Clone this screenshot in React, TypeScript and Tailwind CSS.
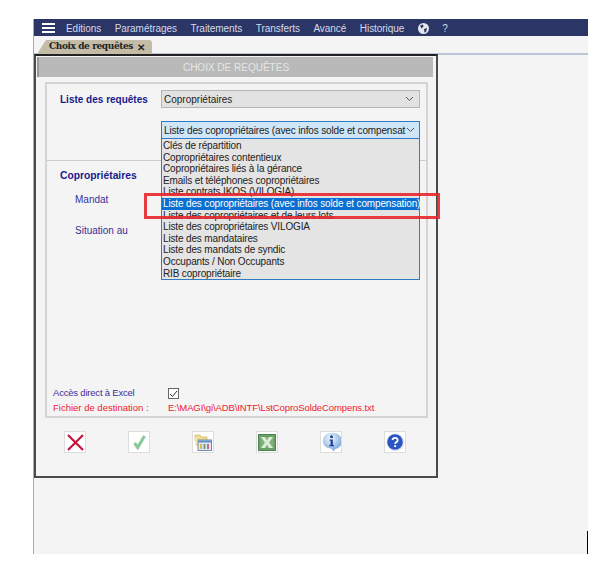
import React from "react";

const menus = ["Editions", "Paramétrages", "Traitements", "Transferts", "Avancé", "Historique"];

const options = [
  "Clés de répartition",
  "Copropriétaires contentieux",
  "Copropriétaires liés à la gérance",
  "Emails et téléphones copropriétaires",
  "Liste contrats IKOS (VILOGIA)",
  "Liste des copropriétaires (avec infos solde et compensation)",
  "Liste des copropriétaires et de leurs lots",
  "Liste des copropriétaires VILOGIA",
  "Liste des mandataires",
  "Liste des mandats de syndic",
  "Occupants / Non Occupants",
  "RIB copropriétaire",
];

const Chevron = () => (
  <svg width="9" height="6" viewBox="0 0 9 6" fill="none" stroke="#555" strokeWidth="1">
    <path d="M1 1l3.5 3.5L8 1" />
  </svg>
);

const IconCancel = () => (
  <svg width="17" height="17" viewBox="0 0 17 17" fill="none" stroke="#c8143c" strokeWidth="2.2">
    <path d="M1 1l15 15M16 1L1 16" />
  </svg>
);

const IconOk = () => (
  <svg width="15" height="16" viewBox="0 0 15 16" fill="none" stroke="#8fc79c" strokeWidth="3.2">
    <path d="M2.5 9l3.2 4.5L12.5 2" />
  </svg>
);

const IconTable = () => (
  <svg width="18" height="18" viewBox="0 0 18 18">
    <path d="M1 2h5l1 2h6v4H1z" fill="#f3dd8c" stroke="#c9b263" strokeWidth="0.7" />
    <path d="M1 4v9h4V8z" fill="#f7e7a8" />
    <rect x="4" y="7" width="13.5" height="10.5" fill="#dfe7f2" stroke="#6f8cb0" />
    <rect x="4.5" y="7.5" width="12.5" height="2" fill="#5f8fc4" />
    <rect x="6" y="11" width="2" height="5" fill="#d8b84c" />
    <rect x="9.5" y="11" width="2" height="5" fill="#6f9f6f" />
    <rect x="13" y="11" width="2" height="5" fill="#c9668a" />
  </svg>
);

const IconExcel = () => (
  <svg width="18" height="17" viewBox="0 0 18 17">
    <rect x="0.5" y="0.5" width="17" height="16" fill="#6aa066" stroke="#4d8550" />
    <rect x="2.500" y="3" width="13" height="11" fill="#7fb27a" />
    <path d="M3 3h4l2 3.500L11 3h4l-4 5.500 4 5.500h-4l-2-3.500L7 14H3l4-5.500z" fill="#dcefd6" />
  </svg>
);

const IconInfo = () => (
  <svg width="19" height="20" viewBox="0 0 19 20">
    <defs>
      <radialGradient id="bubble" cx="40%" cy="30%" r="75%">
        <stop offset="0%" stopColor="#f2f7fd" />
        <stop offset="100%" stopColor="#6d9fd8" />
      </radialGradient>
    </defs>
    <path d="M9.500 1a8.500 7.800 0 0 1 3 16.400L12 19.500 9 16.600A8.500 7.800 0 0 1 9.500 1z" fill="url(#bubble)" />
    <circle cx="9.500" cy="4.800" r="1.500" fill="#1c3f9a" />
    <path d="M7.500 7.500h3.300v5.500h1.200v1.200H7.400V13h1.200V8.700H7.500z" fill="#1c3f9a" />
  </svg>
);

const IconHelp = () => (
  <svg width="19" height="19" viewBox="0 0 19 19">
    <circle cx="9.500" cy="9.500" r="9" fill="#e2e6f2" />
    <circle cx="9" cy="9" r="7.800" fill="#2c55c4" />
    <path d="M6.500 7a2.600 2.300 0 1 1 3.900 2.100c-.9.600-1.200 1-1.200 2" fill="none" stroke="#fff" strokeWidth="1.800" />
    <rect x="8.200" y="12.200" width="1.900" height="1.900" fill="#fff" />
  </svg>
);

const buttons = [IconCancel, IconOk, IconTable, IconExcel, IconInfo, IconHelp];

export default function App() {
  return (
    <div className="relative w-[615px] h-[577px] bg-white pt-[19px] pl-[33px] font-['Liberation_Sans',sans-serif] overflow-hidden">
      <div className="w-[555px] h-[535px] bg-[#f4f4f4] border-l border-[#aaaaaa] flex flex-col">
        {/* top menu */}
        <div className="h-[17px] bg-[#2b3566] flex items-center pt-[1px] text-[10px] text-[#d5d9e8] tracking-[-0.05px] shrink-0">
          <div className="w-[32px] flex flex-col gap-[2px] pl-[8px]">
            <span className="block w-[13px] h-[2px] bg-white" />
            <span className="block w-[13px] h-[2px] bg-white" />
            <span className="block w-[13px] h-[2px] bg-white" />
          </div>
          <div className="flex gap-[13.500px]">
            {menus.map((m) => (
              <span key={m} className="whitespace-nowrap">{m}</span>
            ))}
          </div>
          <svg className="ml-[14px]" width="11" height="11" viewBox="0 0 11 11">
            <circle cx="5.500" cy="5.500" r="5.500" fill="#e4e6ee" />
            <path d="M2 2.500l3-1 .5 2-2 2zM6 6l3-1-1 4-1.500.5z" fill="#2b3566" />
          </svg>
          <span className="ml-[13px]">?</span>
        </div>

        {/* tab row */}
        <div className="h-[19px] shrink-0 border-b-2 border-[#b9c7d8] pt-[4px] pl-[3px]">
          <div className="w-[115px] h-[14px] bg-[#c4bca6] rounded-tr-[3px] [clip-path:polygon(9px_0,100%_0,100%_100%,0_100%)] flex items-center pl-[12px] text-[9px] font-bold text-[#222] font-['DejaVu_Serif',serif] tracking-[-0.4px] whitespace-nowrap">
            <span className="w-[88px]">Choix de requêtes</span>
            <span className="text-[10px] font-['Liberation_Sans',sans-serif]">✕</span>
          </div>
        </div>

        {/* dialog */}
        <div className="w-[404px] h-[424px] -mt-[1px] bg-[#f4f4f4] border-2 border-[#4a4a4a] border-t-[#222] flex flex-col pt-[1px] pr-[3px] pl-[1px]">
          <div className="h-[20px] bg-[#b9b9b9] border-l-2 border-[#999] flex items-center justify-center text-[10px] text-[#e6e6e6] shrink-0">
            CHOIX DE REQUÊTES
          </div>

          <div className="ml-[8px] mr-[5px] mt-[5px] h-[336px] border-2 border-[#d4d4d4] flex flex-col shrink-0">
            {/* query selects */}
            <div className="h-[77px] border-b border-[#cccccc] pl-[13px] pt-[6px] shrink-0">
              <div className="flex items-center">
                <span className="w-[101px] text-[10px] font-bold text-[#1a1a8c] whitespace-nowrap">Liste des requêtes</span>
                <div className="w-[259px] h-[18px] bg-[#e2e2e2] border border-[#b5b5b5] flex items-center justify-between px-[2px] pr-[5px] text-[10px] text-[#222]">
                  <span>Copropriétaires</span>
                  <Chevron />
                </div>
              </div>
            </div>

            {/* copro section */}
            <div className="pl-[13px] pt-[8px] flex-1 flex flex-col">
              <span className="text-[10.300px] font-bold text-[#1a1a8c] leading-[13px]">Copropriétaires</span>
              <span className="mt-[12px] ml-[15px] text-[10px] text-[#3a2f9a] leading-[12px]">Mandat</span>
              <span className="mt-[19px] ml-[15px] text-[10px] text-[#3a2f9a] leading-[12px]">Situation au</span>
              <div className="mt-auto -ml-[7px] text-[9.500px]">
                <div className="flex items-center h-[15px] text-[#3a2f9a]">
                  <span className="w-[115px] whitespace-nowrap tracking-[-0.2px]">Accès direct à Excel</span>
                  <span className="w-[11px] h-[11px] bg-white border border-[#666] flex items-center justify-center">
                    <svg width="9" height="8" viewBox="0 0 9 8" fill="none" stroke="#333" strokeWidth="1">
                      <path d="M1 4l2.500 2.500L8 1" />
                    </svg>
                  </span>
                </div>
                <div className="flex items-center h-[15px] text-[#ee2030]">
                  <span className="w-[115px] whitespace-nowrap">Fichier de destination :</span>
                  <span className="whitespace-nowrap tracking-[-0.1px]">E:\MAGI\gi\ADB\INTF\LstCoproSoldeCompens.txt</span>
                </div>
              </div>
            </div>
          </div>

          {/* toolbar */}
          <div className="flex gap-[42px] pl-[27px] mt-[13px]">
            {buttons.map((Icon, i) => (
              <div
                key={i}
                className="w-[22px] h-[22px] bg-white border border-[#dddddd] flex items-center justify-center"
              >
                <Icon />
              </div>
            ))}
          </div>
        </div>
      </div>

      {/* open dropdown */}
      <div className="absolute left-[161px] top-[121px] w-[259px] text-[10px] text-[#222] tracking-[-0.15px]">
        <div className="h-[18px] bg-[#cfe5f8] border border-[#2f7cc4] flex items-center justify-between pl-[2px] pr-[4px] whitespace-nowrap">
          <span>Liste des copropriétaires (avec infos solde et compensat</span>
          <Chevron />
        </div>
        <div className="h-[141px] bg-[#e4e4e4] border border-t-0 border-[#2f7cc4] pt-[1px] flex flex-col">
          {options.map((o, i) => (
            <div
              key={o}
              className={
                i === 5
                  ? "h-[11.600px] leading-[11.600px] pl-[1px] whitespace-nowrap bg-[#0a6fd0] text-white"
                  : "h-[11.600px] leading-[11.600px] pl-[1px] whitespace-nowrap"
              }
            >
              {o}
            </div>
          ))}
        </div>
      </div>

      {/* red highlight */}
      <div className="absolute left-[144px] top-[193px] w-[296px] h-[26px] border-[3px] border-[#e8262c] opacity-90" />

      {/* stray line lower right */}
      <div className="absolute left-[587px] top-[531px] w-px h-[23px] bg-black" />
    </div>
  );
}
